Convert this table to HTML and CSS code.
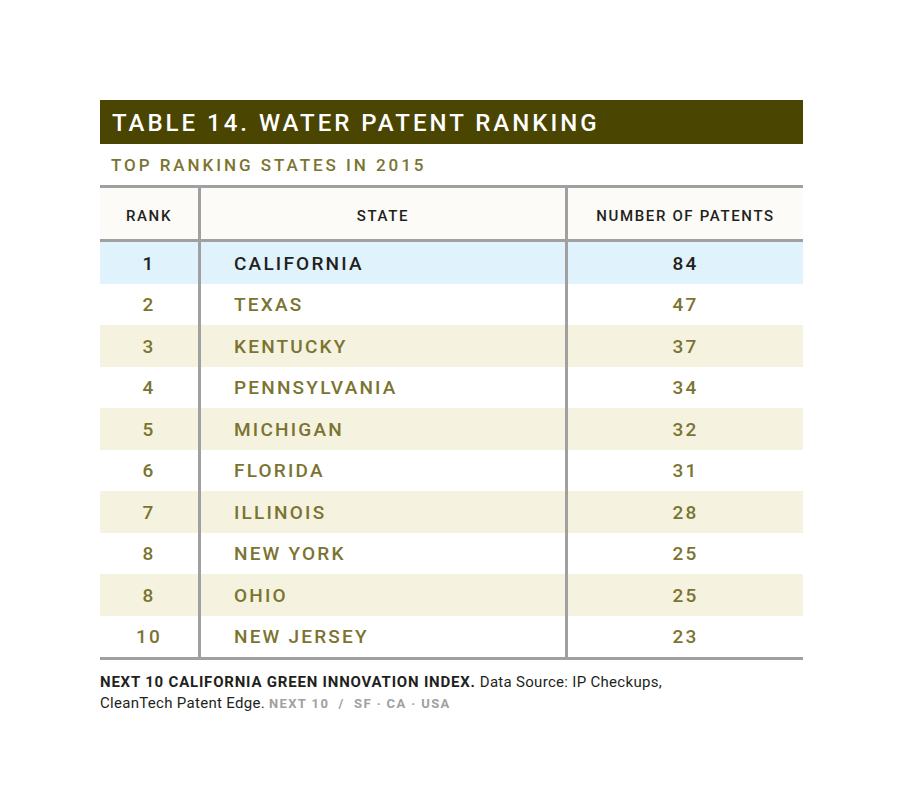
FILE: index.html
```html
<!DOCTYPE html>
<html lang="en">
<head>
<meta charset="utf-8">
<title>Table 14. Water Patent Ranking</title>
<link rel="stylesheet" href="styles.css">
</head>
<body>
<div class="page">
  <div class="figure">
    <div class="title-bar"><h1 class="title">TABLE 14. WATER PATENT RANKING</h1></div>
    <div class="subtitle">TOP RANKING STATES IN 2015</div>
    <div class="table">
      <div class="row head">
        <div class="cell c-rank">RANK</div>
        <div class="cell c-state">STATE</div>
        <div class="cell c-num">NUMBER OF PATENTS</div>
      </div>
      <div class="row hl">
        <div class="cell c-rank">1</div>
        <div class="cell c-state">CALIFORNIA</div>
        <div class="cell c-num">84</div>
      </div>
      <div class="row">
        <div class="cell c-rank">2</div>
        <div class="cell c-state">TEXAS</div>
        <div class="cell c-num">47</div>
      </div>
      <div class="row alt">
        <div class="cell c-rank">3</div>
        <div class="cell c-state">KENTUCKY</div>
        <div class="cell c-num">37</div>
      </div>
      <div class="row">
        <div class="cell c-rank">4</div>
        <div class="cell c-state">PENNSYLVANIA</div>
        <div class="cell c-num">34</div>
      </div>
      <div class="row alt">
        <div class="cell c-rank">5</div>
        <div class="cell c-state">MICHIGAN</div>
        <div class="cell c-num">32</div>
      </div>
      <div class="row">
        <div class="cell c-rank">6</div>
        <div class="cell c-state">FLORIDA</div>
        <div class="cell c-num">31</div>
      </div>
      <div class="row alt">
        <div class="cell c-rank">7</div>
        <div class="cell c-state">ILLINOIS</div>
        <div class="cell c-num">28</div>
      </div>
      <div class="row">
        <div class="cell c-rank">8</div>
        <div class="cell c-state">NEW YORK</div>
        <div class="cell c-num">25</div>
      </div>
      <div class="row alt">
        <div class="cell c-rank">8</div>
        <div class="cell c-state">OHIO</div>
        <div class="cell c-num">25</div>
      </div>
      <div class="row">
        <div class="cell c-rank">10</div>
        <div class="cell c-state">NEW JERSEY</div>
        <div class="cell c-num">23</div>
      </div>
    </div>
    <p class="source"><strong>NEXT 10 CALIFORNIA GREEN INNOVATION INDEX.</strong> Data Source: IP Checkups,<br>CleanTech Patent Edge. <span class="brand">NEXT 10 &nbsp;/&nbsp; SF · CA · USA</span></p>
  </div>
</div>
</body>
</html>
```
FILE: styles.css
```css
html, body {
  margin: 0;
  padding: 0;
  background: #ffffff;
}

body {
  font-family: Roboto, "DejaVu Sans", sans-serif;
  color: #231f20;
}

.page {
  padding: 100px 0 0 100px;
}

.figure {
  width: 703px;
}

.title-bar {
  height: 44px;
  background: #4a4500;
  display: flex;
  align-items: center;
  padding-left: 12px;
}

.title {
  margin: 2px 0 0 0;
  font-size: 24px;
  font-weight: 500;
  letter-spacing: 3px;
  color: #ffffff;
  line-height: 1;
}

.subtitle {
  height: 41px;
  display: flex;
  align-items: center;
  padding-left: 11px;
  font-size: 17px;
  font-weight: 500;
  letter-spacing: 2.95px;
  color: #7b7431;
}

.table {
  border-top: 3px solid #a0a0a0;
  border-bottom: 3px solid #a0a0a0;
}

.row {
  display: grid;
  grid-template-columns: 98px 367px 238px;
  height: 41.5px;
  font-size: 19px;
  font-weight: 500;
  letter-spacing: 2.2px;
  color: #7b7431;
}

.row.head {
  height: 51px;
  background: #fcfbf7;
  border-bottom: 3px solid #a0a0a0;
  font-size: 15px;
  letter-spacing: 1.65px;
  color: #231f20;
}

.row.hl {
  background: #e0f2fc;
  color: #231f20;
}

.row.alt {
  background: #f5f2e0;
}

.cell {
  display: flex;
  align-items: center;
  padding-top: 1px;
}

.head .cell {
  padding-top: 4px;
}

.c-rank {
  justify-content: center;
}

.c-state {
  border-left: 3px solid #a0a0a0;
  padding-left: 33px;
}

.head .c-state {
  justify-content: center;
  padding-left: 0;
}

.c-num {
  border-left: 3px solid #a0a0a0;
  justify-content: center;
}

.source {
  margin: 12px 0 0 0;
  font-size: 15px;
  line-height: 21px;
  letter-spacing: 0.3px;
  color: #231f20;
}

.source strong {
  font-weight: 700;
  letter-spacing: 0.8px;
}

.brand {
  font-size: 13px;
  font-weight: 700;
  letter-spacing: 1.4px;
  color: #a0a0a0;
}
```
